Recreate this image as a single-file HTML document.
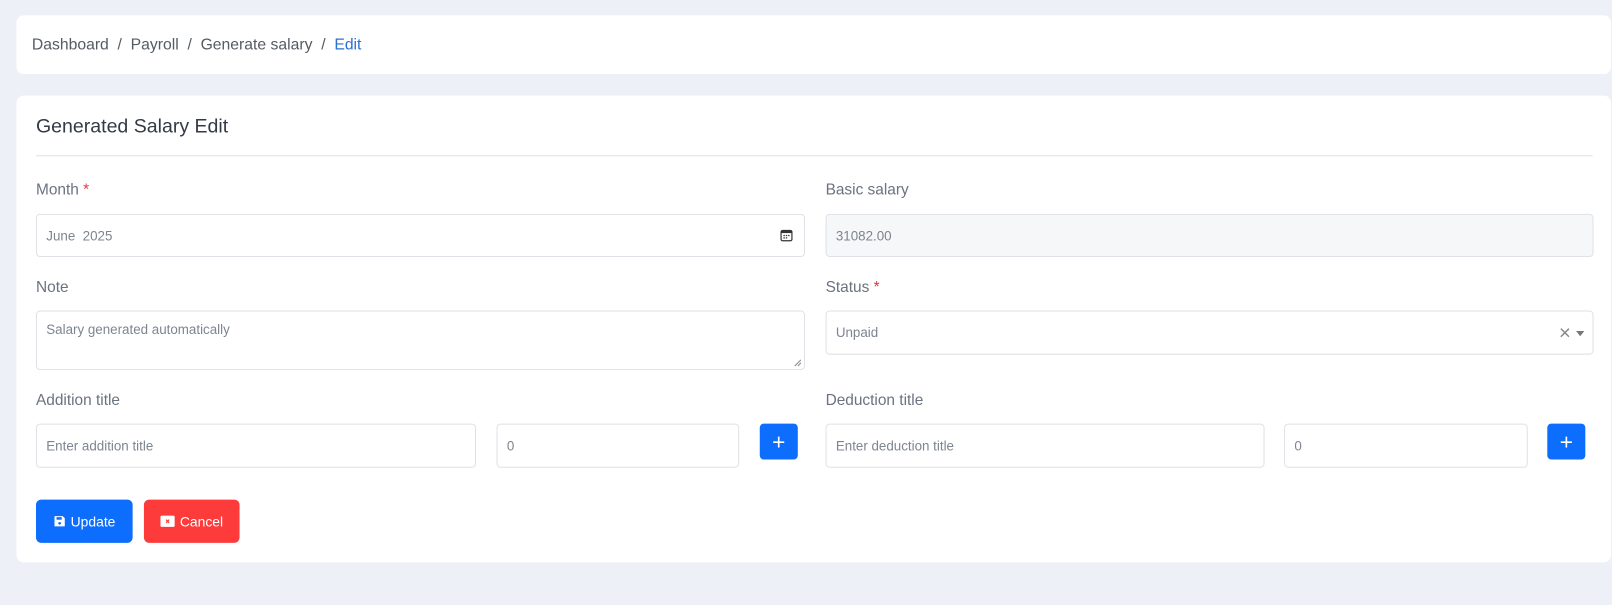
<!DOCTYPE html>
<html><head><meta charset="utf-8"><style>
*{box-sizing:border-box;margin:0;padding:0}
html,body{width:1612px;height:604px;background:#edf0f6;overflow:hidden}
body{font-family:"Liberation Sans",sans-serif}
#w{position:absolute;left:0;top:0;width:1568px;height:588px;transform:scale(1.0281);transform-origin:0 0}
.card{position:absolute;left:16px;width:1551px;background:#fff;border-radius:7px}
.a{position:absolute}
.lbl{position:absolute;font-size:15px;color:#6b7280}
.inp{position:absolute;border:1px solid #dee2e6;border-radius:4px;background:#fff;font-size:13px;color:#7d8590;padding-left:9px;display:flex;align-items:center}
.plus{position:absolute;width:37px;height:35px;background:#0d6efd;border-radius:4px;color:#fff;font-size:22px;display:flex;align-items:center;justify-content:center}
.star{color:#dc3545}
</style></head><body><div id="w">
<div class="card" style="top:15px;height:57px"></div>
<div class="a" style="left:31px;top:35px;font-size:15.3px;color:#555b63">Dashboard &nbsp;/&nbsp; Payroll &nbsp;/&nbsp; Generate salary &nbsp;/&nbsp; <span style="color:#2b6fd1">Edit</span></div>
<div class="card" style="top:93px;height:454px"></div>
<div class="a" style="left:35px;top:113px;font-size:19px;color:#343a45">Generated Salary Edit</div>
<div class="a" style="left:35px;top:151px;width:1514px;height:1px;background:#dfe2e7"></div>

<div class="lbl" style="left:35px;top:176px">Month <span class="star">*</span></div>
<div class="inp" style="left:35px;top:208px;width:748px;height:42px">June&nbsp; 2025
<svg style="position:absolute;right:11px;top:14px" width="12" height="12" viewBox="0 0 12 12"><rect x="0.7" y="1.2" width="10.6" height="10" rx="1.5" fill="none" stroke="#333" stroke-width="1.2"/><rect x="0.7" y="1.2" width="10.6" height="2.5" fill="#333"/><rect x="3" y="5.5" width="1.4" height="1.2" fill="#333"/><rect x="5.3" y="5.5" width="1.4" height="1.2" fill="#333"/><rect x="7.6" y="5.5" width="1.4" height="1.2" fill="#333"/><rect x="3" y="7.8" width="1.4" height="1.2" fill="#333"/><rect x="5.3" y="7.8" width="1.4" height="1.2" fill="#333"/></svg></div>
<div class="lbl" style="left:803px;top:176px">Basic salary</div>
<div class="inp" style="left:803px;top:208px;width:747px;height:42px;background:#f6f7f9">31082.00</div>

<div class="lbl" style="left:35px;top:271px">Note</div>
<div class="inp" style="left:35px;top:302px;width:748px;height:58px;align-items:flex-start;padding-top:10px">Salary generated automatically
<svg style="position:absolute;right:2px;bottom:2px" width="8" height="8"><path d="M1 7L7 1M4 7L7 4" stroke="#888" stroke-width="1"/></svg></div>
<div class="lbl" style="left:803px;top:271px">Status <span class="star">*</span></div>
<div class="inp" style="left:803px;top:302px;width:747px;height:43px">Unpaid
<span style="position:absolute;right:21px;top:10px;font-size:20px;color:#888">×</span>
<span style="position:absolute;right:8px;top:19px;border:4px solid transparent;border-top:5px solid #777;border-bottom:0"></span></div>

<div class="lbl" style="left:35px;top:381px">Addition title</div>
<div class="inp" style="left:35px;top:412px;width:428px;height:43px">Enter addition title</div>
<div class="inp" style="left:483px;top:412px;width:236px;height:43px">0</div>
<div class="plus" style="left:739px;top:412px">+</div>
<div class="lbl" style="left:803px;top:381px">Deduction title</div>
<div class="inp" style="left:803px;top:412px;width:427px;height:43px">Enter deduction title</div>
<div class="inp" style="left:1249px;top:412px;width:237px;height:43px">0</div>
<div class="plus" style="left:1505px;top:412px">+</div>

<div class="a" style="left:35px;top:486px;width:94px;height:42px;background:#0d6efd;border-radius:5px;color:#fff;font-size:13.5px;display:flex;align-items:center;justify-content:center;gap:5px">
<svg width="12" height="12" viewBox="0 0 12 12"><path d="M1 1.5A.5.5 0 0 1 1.5 1H9L11 3V10.5A.5.5 0 0 1 10.5 11H1.5A.5.5 0 0 1 1 10.5Z" fill="#fff"/><rect x="3" y="2" width="5" height="2.5" fill="#0d6efd"/><circle cx="6" cy="8" r="1.3" fill="#0d6efd"/></svg>Update</div>
<div class="a" style="left:140px;top:486px;width:93px;height:42px;background:#fd3b3b;border-radius:5px;color:#fff;font-size:13.5px;display:flex;align-items:center;justify-content:center;gap:5px">
<svg width="14" height="12" viewBox="0 0 14 12"><rect x="0" y="0.5" width="14" height="11" rx="1.5" fill="#fff"/><path d="M5.5 4.5L8.5 7.5M8.5 4.5L5.5 7.5" stroke="#fd3b3b" stroke-width="1.2"/></svg>Cancel</div>
</div></body></html>
